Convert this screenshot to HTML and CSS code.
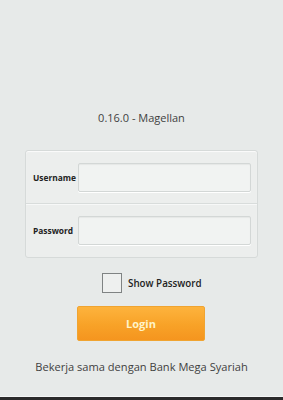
FILE: index.html
```html
<!DOCTYPE html>
<html>
<head>
<meta charset="utf-8">
<link rel="stylesheet" href="styles.css">
</head>
<body>
<div class="page">
  <div class="version">0.16.0 - Magellan</div>
  <div class="panel">
    <div class="row">
      <label class="label">Username</label>
      <div class="input"></div>
    </div>
    <div class="row">
      <label class="label">Password</label>
      <div class="input"></div>
    </div>
  </div>
  <div class="check-row">
    <span class="checkbox"></span>
    <span class="check-text">Show Password</span>
  </div>
  <div class="btn-wrap"><div class="login">Login</div></div>
  <div class="footer">Bekerja sama dengan Bank Mega Syariah</div>
</div>
<div class="bottom-bar"></div>
</body>
</html>
```
FILE: styles.css
```css
html, body {
  margin: 0;
  padding: 0;
}
body {
  width: 283px;
  height: 400px;
  background: #e7eae9;
  font-family: "Open Sans", "Noto Sans", sans-serif;
  color: #444;
  display: flex;
  flex-direction: column;
  overflow: hidden;
}
.page {
  flex: 1;
  display: flex;
  flex-direction: column;
}
.version {
  margin-top: 110px;
  height: 16px;
  line-height: 16px;
  text-align: center;
  font-size: 11px;
  color: #3f3f3f;
}
.panel {
  margin: 24px 0 0 25px;
  width: 231px;
  border: 1px solid #d6dad9;
  border-radius: 3px;
  background: #eceeed;
  box-shadow: 0 1px 1px rgba(255,255,255,0.8) inset;
}
.row {
  height: 52px;
  display: flex;
  align-items: center;
  padding: 0 6px 0 7px;
}
.row + .row {
  border-top: 1px solid #d8dcdb;
  box-shadow: 0 1px 0 #f7f8f8 inset;
  height: 53px;
}
.label {
  width: 45px;
  flex: none;
  font-size: 8.4px;
  font-weight: bold;
  color: #222;
}
.input {
  flex: 1;
  height: 27px;
  background: #f1f3f2;
  border: 1px solid #d3d7d6;
  border-radius: 2px;
  box-shadow: 0 1px 0 #ffffff, inset 0 1px 1px rgba(0,0,0,0.05);
}
.check-row {
  margin: 15px 0 0 102px;
  display: flex;
  align-items: center;
  height: 20px;
}
.checkbox {
  width: 18px;
  height: 18px;
  border: 1px solid #7f8383;
  background: #eef0ef;
  box-sizing: content-box;
}
.check-text {
  margin-left: 6px;
  font-size: 9.8px;
  font-weight: 600;
  color: #222;
}
.btn-wrap {
  margin: 13px 0 0 77px;
}
.login {
  width: 126px;
  height: 33px;
  border: 1px solid #f0a431;
  border-radius: 2px;
  background: linear-gradient(#fdb33d, #f8a227 55%, #f5951f);
  color: #fff3c8;
  font-weight: bold;
  font-size: 11px;
  display: flex;
  align-items: center;
  justify-content: center;
}
.footer {
  margin-top: 18px;
  text-align: center;
  font-size: 11.1px;
  color: #3f3f3f;
}
.bottom-bar {
  height: 3px;
  background: #2b2b2b;
  border-top: 1px solid #f5f6f6;
}
```
